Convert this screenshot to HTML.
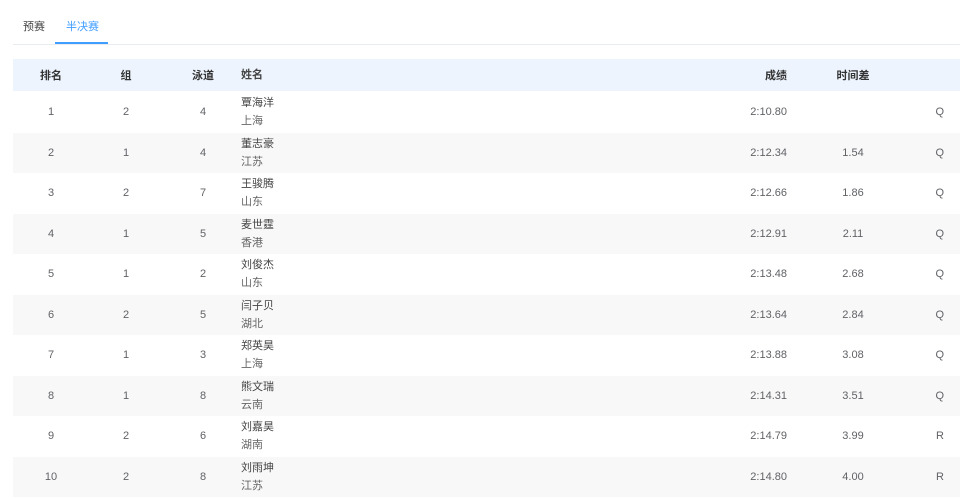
<!DOCTYPE html>
<html><head><meta charset="utf-8"><style>
body{margin:0;width:960px;height:499px;background:#fff;font-family:"Liberation Sans","Noto Sans CJK SC",sans-serif;font-size:11px;color:#606266;overflow:hidden;position:relative}
.tabs{position:absolute;left:13px;top:0;right:0;height:44px;border-bottom:1px solid #e8ebf0}
.tab{position:absolute;top:18px;font-size:11px}
.t1{left:10px;color:#444}
.t2{left:53px;color:#409eff}
.ul{position:absolute;left:42px;width:53px;top:42px;height:2px;background:#409eff}
.table{position:absolute;left:13px;top:59px;width:947px}
.row{position:relative;height:40.5px}
.hd{height:32px;background:#edf4fe;font-weight:bold;color:#333;margin-bottom:1px}
.row:nth-child(odd):not(.hd){background:#f8f8f8}
.c{position:absolute;top:50%;transform:translateY(-50%);white-space:nowrap}
.a{left:38px;width:0;display:flex;justify-content:center}
.b{left:113px;width:0;display:flex;justify-content:center}
.d{left:190px;width:0;display:flex;justify-content:center}
.n{left:228px;line-height:18px;color:#444}
.n span{display:block}
.n span+span{color:#666}
.s{right:173px}
.g{left:840px;width:0;display:flex;justify-content:center}
.q{right:16px}
</style></head><body>
<div class="tabs"><span class="tab t1">预赛</span><span class="tab t2">半决赛</span><div class="ul"></div></div>
<div class="table">
<div class="row hd"><span class="c a">排名</span><span class="c b">组</span><span class="c d">泳道</span><span class="c n">姓名</span><span class="c s">成绩</span><span class="c g">时间差</span></div>
<div class="row"><span class="c a">1</span><span class="c b">2</span><span class="c d">4</span><span class="c n"><span>覃海洋</span><span>上海</span></span><span class="c s">2:10.80</span><span class="c g"></span><span class="c q">Q</span></div>
<div class="row"><span class="c a">2</span><span class="c b">1</span><span class="c d">4</span><span class="c n"><span>董志豪</span><span>江苏</span></span><span class="c s">2:12.34</span><span class="c g">1.54</span><span class="c q">Q</span></div>
<div class="row"><span class="c a">3</span><span class="c b">2</span><span class="c d">7</span><span class="c n"><span>王骏腾</span><span>山东</span></span><span class="c s">2:12.66</span><span class="c g">1.86</span><span class="c q">Q</span></div>
<div class="row"><span class="c a">4</span><span class="c b">1</span><span class="c d">5</span><span class="c n"><span>麦世霆</span><span>香港</span></span><span class="c s">2:12.91</span><span class="c g">2.11</span><span class="c q">Q</span></div>
<div class="row"><span class="c a">5</span><span class="c b">1</span><span class="c d">2</span><span class="c n"><span>刘俊杰</span><span>山东</span></span><span class="c s">2:13.48</span><span class="c g">2.68</span><span class="c q">Q</span></div>
<div class="row"><span class="c a">6</span><span class="c b">2</span><span class="c d">5</span><span class="c n"><span>闫子贝</span><span>湖北</span></span><span class="c s">2:13.64</span><span class="c g">2.84</span><span class="c q">Q</span></div>
<div class="row"><span class="c a">7</span><span class="c b">1</span><span class="c d">3</span><span class="c n"><span>郑英昊</span><span>上海</span></span><span class="c s">2:13.88</span><span class="c g">3.08</span><span class="c q">Q</span></div>
<div class="row"><span class="c a">8</span><span class="c b">1</span><span class="c d">8</span><span class="c n"><span>熊文瑞</span><span>云南</span></span><span class="c s">2:14.31</span><span class="c g">3.51</span><span class="c q">Q</span></div>
<div class="row"><span class="c a">9</span><span class="c b">2</span><span class="c d">6</span><span class="c n"><span>刘嘉昊</span><span>湖南</span></span><span class="c s">2:14.79</span><span class="c g">3.99</span><span class="c q">R</span></div>
<div class="row"><span class="c a">10</span><span class="c b">2</span><span class="c d">8</span><span class="c n"><span>刘雨坤</span><span>江苏</span></span><span class="c s">2:14.80</span><span class="c g">4.00</span><span class="c q">R</span></div>
</div>
</body></html>
